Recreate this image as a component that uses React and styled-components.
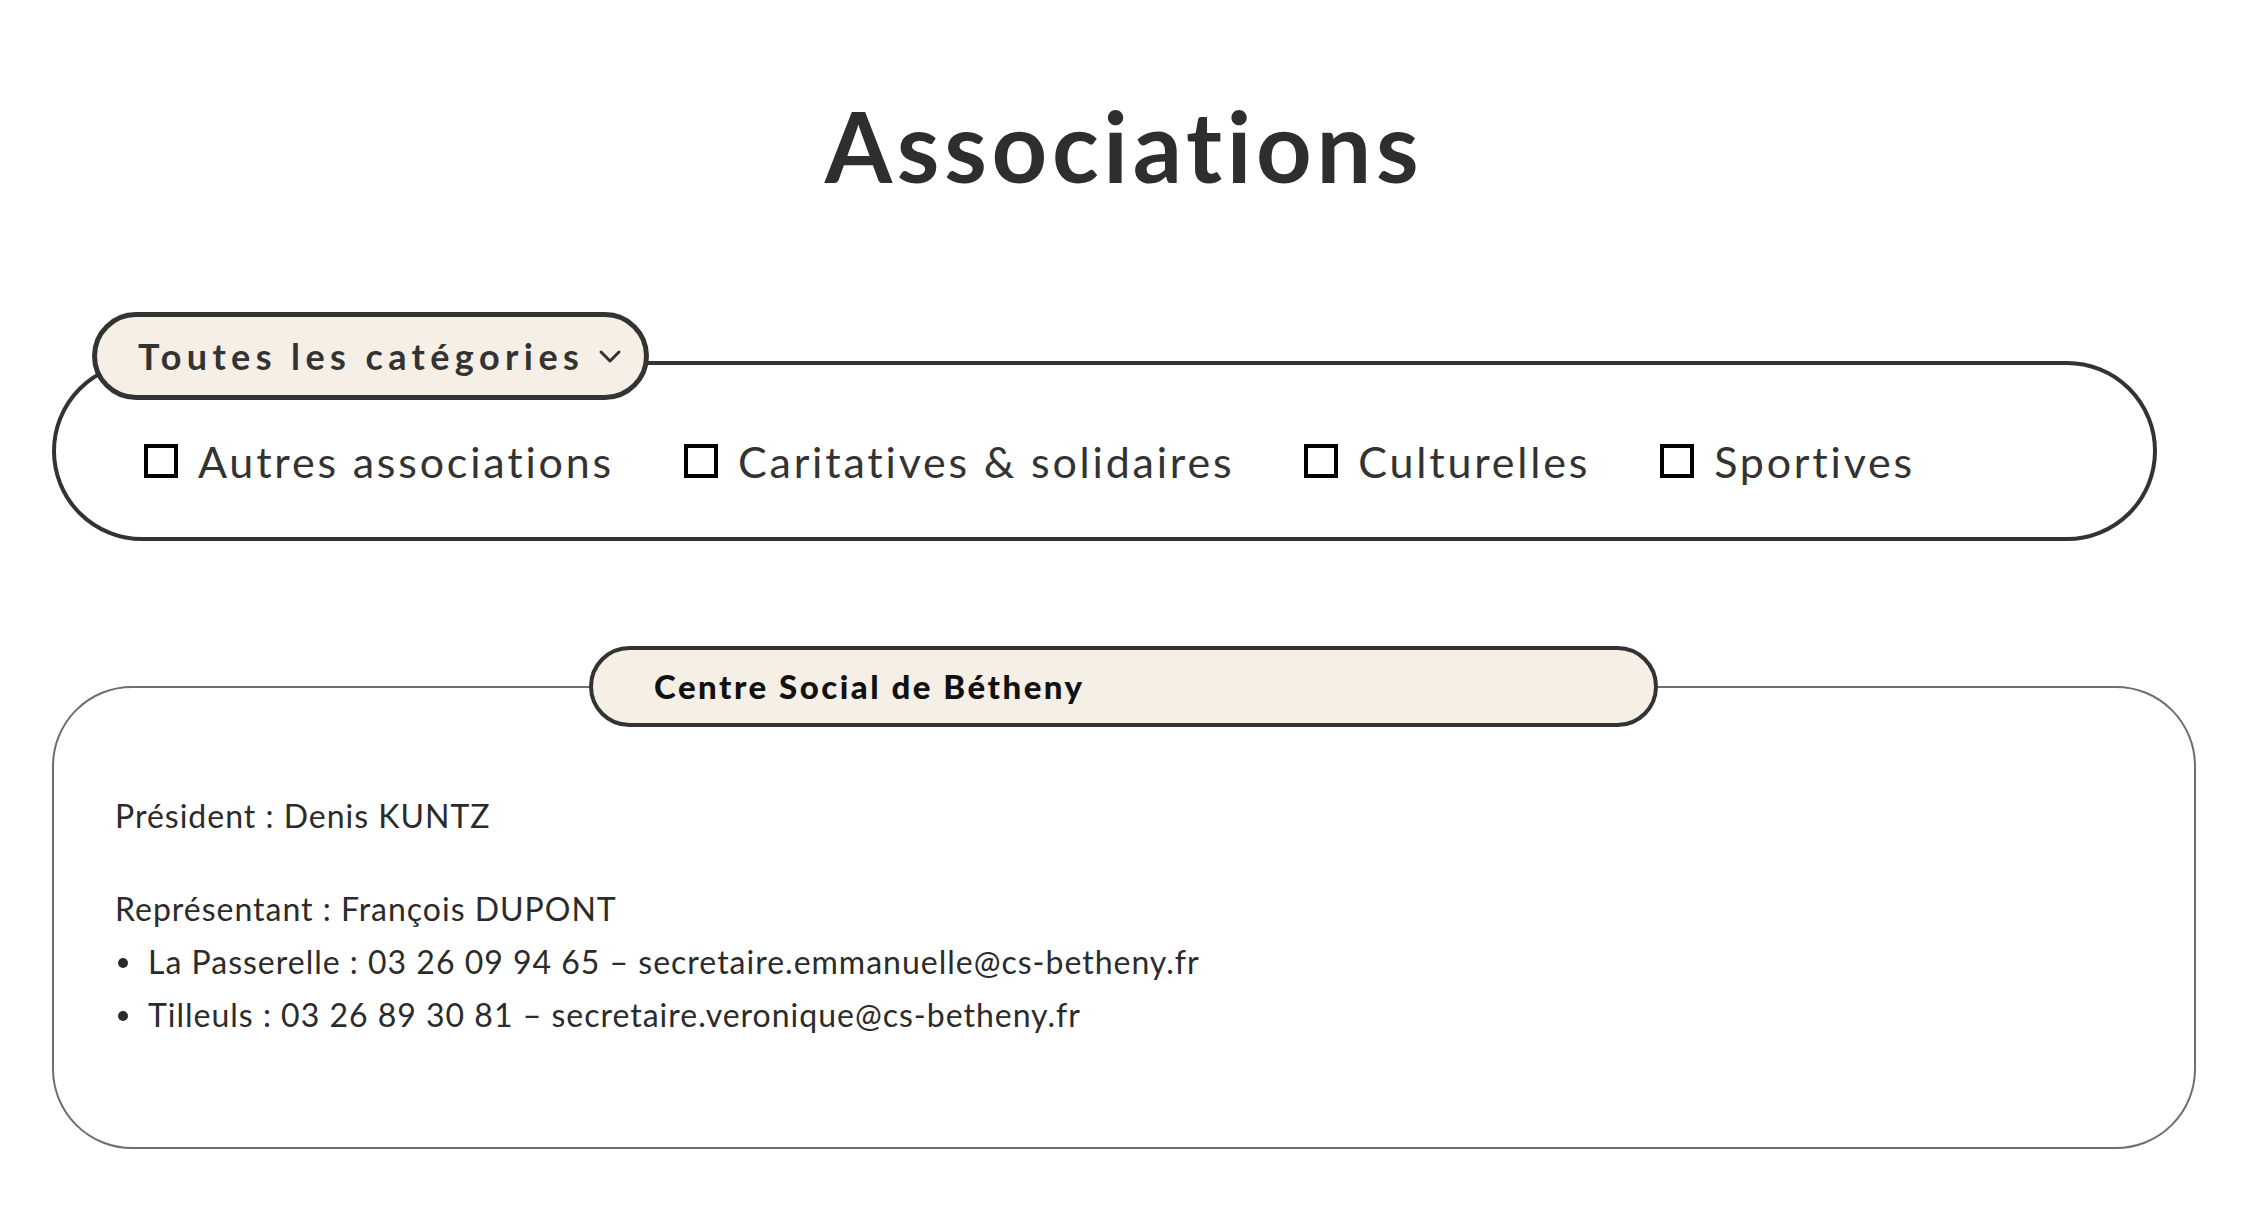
import React from 'react'
import styled, { createGlobalStyle } from 'styled-components';

const GlobalStyle = createGlobalStyle`
    body {
        margin: 0;
        background: #ffffff;
        font-family: Lato, "Noto Sans", sans-serif;
        color: #2e2e2e;
    }
`
const Page = styled.div`
    padding: 0 52px 40px;
`
const Title = styled.h1`
    margin: 97px 0 0;
    padding-right: 12px;
    font-size: 97px;
    line-height: 1;
    font-weight: 700;
    text-align: center;
    letter-spacing: 4.7px;
    color: #2e2e2e;
`
const FilterWrap = styled.div`
    position: relative;
    margin-top: 118px;
    padding-top: 49px;
`
const FilterButton = styled.button`
    position: absolute;
    top: 0;
    left: 40px;
    z-index: 1;
    display: flex;
    align-items: center;
    gap: 14px;
    height: 88px;
    padding: 0 22px 0 41px;
    border: 5px solid #333;
    border-radius: 999px;
    background: #f5efe6;
    font-family: Lato, sans-serif;
    font-size: 36px;
    font-weight: 700;
    letter-spacing: 5.4px;
    color: #333;
    cursor: pointer;
`
const FilterBox = styled.div`
    display: flex;
    align-items: center;
    gap: 70px;
    height: 180px;
    box-sizing: border-box;
    margin-right: 51px;
    padding: 20px 0 0 88px;
    border: 4px solid #333;
    border-radius: 999px;
`
const Option = styled.label`
    display: flex;
    align-items: center;
    gap: 20px;
    font-size: 43px;
    letter-spacing: 2.8px;
    color: #333;
    cursor: pointer;
`
const Box = styled.span`
    width: 34px;
    height: 34px;
    flex-shrink: 0;
    box-sizing: border-box;
    border: 4px solid #000;
    background: #fff;
`
const Card = styled.div`
    position: relative;
    margin: 145px 12px 0 0;
    padding: 101px 61px 106px;
    border: 2px solid #6e6e6e;
    border-radius: 80px;
    font-size: 32px;
    line-height: 53px;
    letter-spacing: 1px;
    color: #2b2b2b;
`
const Tab = styled.div`
    position: absolute;
    top: -42px;
    left: 535px;
    display: flex;
    align-items: center;
    width: 1069px;
    height: 81px;
    box-sizing: border-box;
    padding-left: 61px;
    border: 4px solid #333;
    border-radius: 999px;
    background: #f5efe6;
    font-size: 33px;
    font-weight: 900;
    letter-spacing: 2.5px;
    line-height: 1;
    color: #111;
`
const Line = styled.p`
    margin: 0 0 ${p => p.$gap || 0}px;
`
const List = styled.ul`
    margin: 0;
    padding: 0;
    list-style: none;
`
const Item = styled.li`
    position: relative;
    padding-left: 33px;
    &::before {
        content: '';
        position: absolute;
        left: 3px;
        top: 23px;
        width: 10px;
        height: 10px;
        border-radius: 50%;
        background: #2b2b2b;
    }
`

const Chevron = () => (
    <svg width="24" height="16" viewBox="0 0 24 16" fill="none">
        <path d="M3 4l9 9 9-9" stroke="#333" strokeWidth="3" strokeLinecap="round" strokeLinejoin="round" />
    </svg>
)

const categories = ['Autres associations', 'Caritatives & solidaires', 'Culturelles', 'Sportives']

const App = () => {
    return (
        <Page>
            <GlobalStyle />
            <Title>Associations</Title>
            <FilterWrap>
                <FilterButton>
                    Toutes les catégories
                    <Chevron />
                </FilterButton>
                <FilterBox>
                    {categories.map(c => (
                        <Option key={c}>
                            <Box />
                            {c}
                        </Option>
                    ))}
                </FilterBox>
            </FilterWrap>
            <Card>
                <Tab>Centre Social de Bétheny</Tab>
                <Line $gap={40}>Président : Denis KUNTZ</Line>
                <Line>Représentant : François DUPONT</Line>
                <List>
                    <Item>La Passerelle : 03 26 09 94 65 – secretaire.emmanuelle@cs-betheny.fr</Item>
                    <Item>Tilleuls : 03 26 89 30 81 – secretaire.veronique@cs-betheny.fr</Item>
                </List>
            </Card>
        </Page>
    )
}

export default App
